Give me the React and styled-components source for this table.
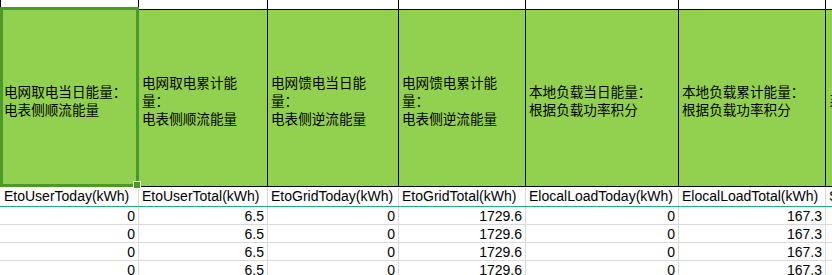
import React from "react";
import styled, { createGlobalStyle, css } from "styled-components";

const GlobalStyle = createGlobalStyle`
    html, body {
        margin: 0;
        padding: 0;
        background: #ffffff;
        overflow: hidden;
    }
`;

const COLS = "138px 129px 131px 127px 153px 147px 1fr";

const columns = [
    {
        title: ["电网取电当日能量：", "电表侧顺流能量"],
        label: "EtoUserToday(kWh)",
        value: "0",
    },
    {
        title: ["电网取电累计能", "量：", "电表侧顺流能量"],
        label: "EtoUserTotal(kWh)",
        value: "6.5",
    },
    {
        title: ["电网馈电当日能", "量：", "电表侧逆流能量"],
        label: "EtoGridToday(kWh)",
        value: "0",
    },
    {
        title: ["电网馈电累计能", "量：", "电表侧逆流能量"],
        label: "EtoGridTotal(kWh)",
        value: "1729.6",
    },
    {
        title: ["本地负载当日能量：", "根据负载功率积分"],
        label: "ElocalLoadToday(kWh)",
        value: "0",
    },
    {
        title: ["本地负载累计能量：", "根据负载功率积分"],
        label: "ElocalLoadTotal(kWh)",
        value: "167.3",
    },
    {
        title: ["系统自发自用能量"],
        label: "SelfUseToday(kWh)",
        value: "",
    },
];

const Sheet = styled.div`
    width: 832px;
    height: 275px;
    overflow: hidden;
    display: flex;
    flex-direction: column;
    font-family: "Liberation Sans", Arial, sans-serif;
    color: #000;
`;

const Row = styled.div`
    display: grid;
    grid-template-columns: ${COLS};
    height: ${({ h }) => h}px;
    flex: none;
    box-sizing: border-box;
    border-bottom: 1px solid ${({ line }) => line};
`;

const cellBase = css`
    box-sizing: border-box;
    min-width: 0;
    overflow: hidden;
    white-space: nowrap;
`;

const TopCell = styled.div`
    ${cellBase};
    border-left: 1px solid #000;
`;

const HeadCell = styled.div`
    ${cellBase};
    position: relative;
    overflow: visible;
    background: #92d050;
    border-left: ${({ first }) => (first ? "none" : "1px solid #000")};
    display: flex;
    align-items: center;
    padding: 0 0 0 ${({ first }) => (first ? 4 : 3)}px;
    font-family: "Noto Sans CJK SC", "Liberation Sans", sans-serif;
    font-size: 13.6px;
    line-height: 18px;
`;

const HeadText = styled.div`
    display: flex;
    flex-direction: column;
    margin-top: 4px;
`;

const Selection = styled.div`
    position: absolute;
    top: -3px;
    left: 0;
    right: -1px;
    bottom: -1px;
    border: 3px solid #4a9a2a;
    pointer-events: none;
    z-index: 2;
`;

const Handle = styled.div`
    position: absolute;
    right: -5px;
    bottom: -5px;
    width: 6px;
    height: 6px;
    background: #4a9a2a;
    border: 1px solid #ffffff;
`;

const LabelCell = styled.div`
    ${cellBase};
    border-left: ${({ first }) => (first ? "none" : "1px solid #d9d9d9")};
    padding-left: ${({ first }) => (first ? 4 : 3)}px;
    font-size: 14px;
    line-height: 18px;
`;

const DataCell = styled.div`
    ${cellBase};
    border-left: ${({ first }) => (first ? "none" : "1px solid #d9d9d9")};
    padding-right: 3px;
    text-align: right;
    font-size: 14px;
    line-height: 18px;
`;

export default function App() {
    const dataRows = [0, 1, 2, 3];

    return (
        <Sheet>
            <GlobalStyle />
            <Row h={10} line="#000">
                {columns.map((c, i) => (
                    <TopCell key={i} />
                ))}
            </Row>
            <Row h={177} line="#000">
                {columns.map((c, i) => (
                    <HeadCell key={i} first={i === 0}>
                        <HeadText>
                            {c.title.map((t, j) => (
                                <span key={j}>{t}</span>
                            ))}
                        </HeadText>
                        {i === 0 && (
                            <Selection>
                                <Handle />
                            </Selection>
                        )}
                    </HeadCell>
                ))}
            </Row>
            <Row h={20} line="#2aa97a">
                {columns.map((c, i) => (
                    <LabelCell key={i} first={i === 0}>
                        {c.label}
                    </LabelCell>
                ))}
            </Row>
            {dataRows.map((r) => (
                <Row key={r} h={18} line="#d9d9d9">
                    {columns.map((c, i) => (
                        <DataCell key={i} first={i === 0}>
                            {c.value}
                        </DataCell>
                    ))}
                </Row>
            ))}
        </Sheet>
    );
}
